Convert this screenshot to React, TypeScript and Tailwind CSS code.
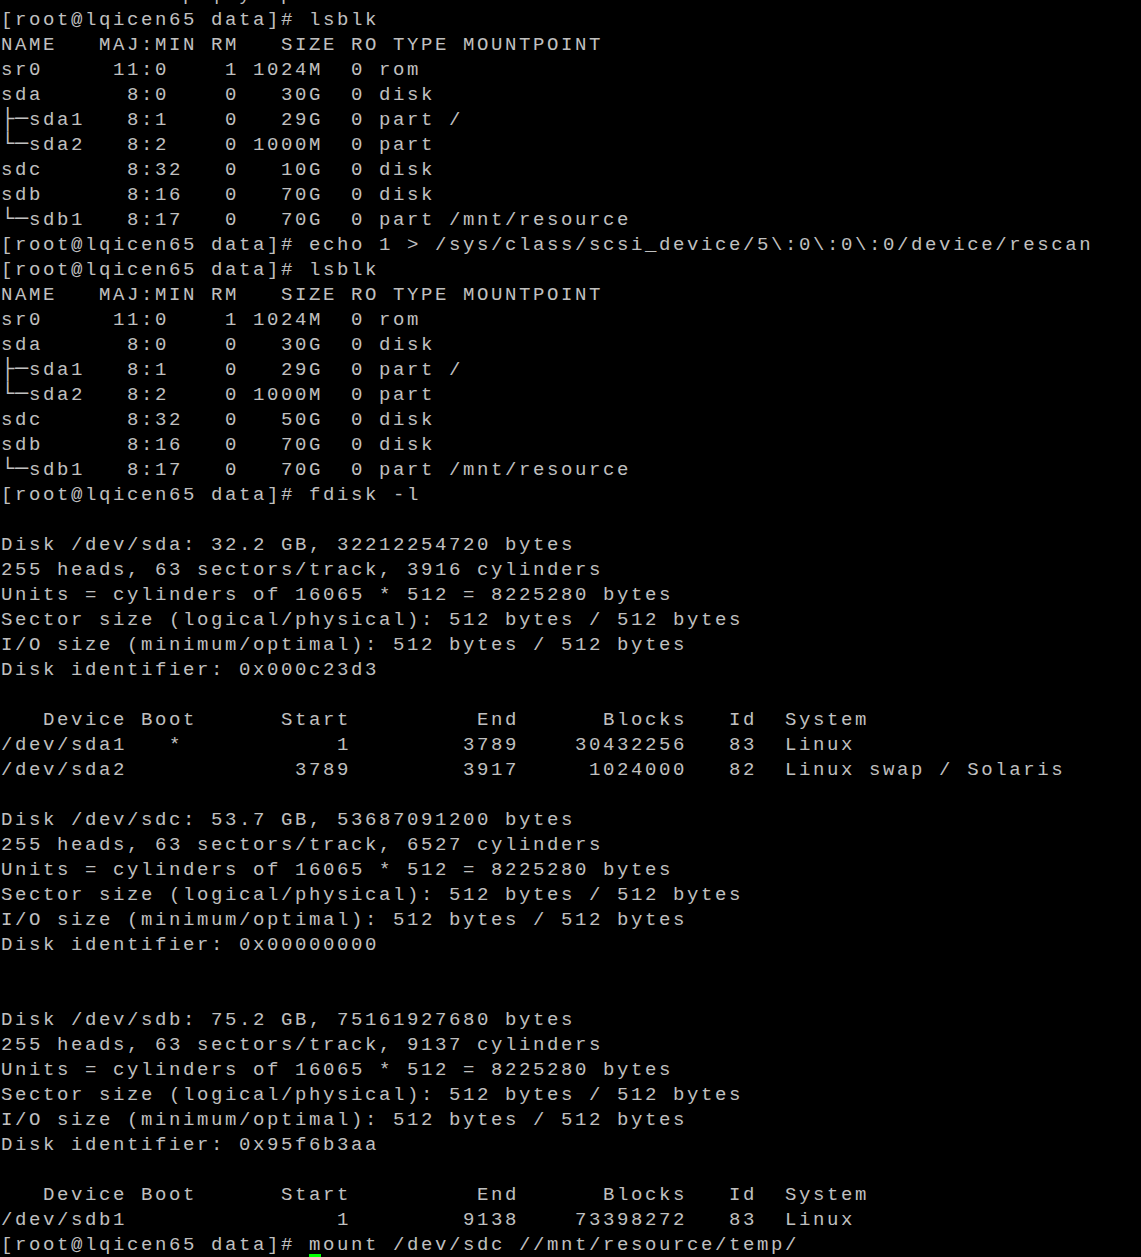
const PROMPT = "[root@lqicen65 data]# ";

// lsblk row: columns line up like the real tool output
const lb = (name: string, maj: string, min: string, rm: string, size: string, ro: string, type: string, mp = "") =>
  (name.padEnd(7) + maj.padStart(3) + ":" + min.padEnd(3) + rm.padStart(3) + size.padStart(6) + ro.padStart(3) + " " + type.padEnd(4) + " " + mp).trimEnd();

// fdisk partition row
const fd = (dev: string, boot: string, start: string, end: string, blocks: string, id: string, sys: string) =>
  dev.padEnd(12) + boot.padEnd(1) + start.padStart(12) + end.padStart(12) + blocks.padStart(12) + id.padStart(5) + "  " + sys;

const fdHeader = "   Device Boot" + "Start".padStart(11) + "End".padStart(12) + "Blocks".padStart(12) + "Id".padStart(5) + "  System";

const lsblk = (sdc: string) => [
  PROMPT + "lsblk",
  "NAME   MAJ:MIN RM   SIZE RO TYPE MOUNTPOINT",
  lb("sr0", "11", "0", "1", "1024M", "0", "rom"),
  lb("sda", "8", "0", "0", "30G", "0", "disk"),
  lb("├─sda1", "8", "1", "0", "29G", "0", "part", "/"),
  lb("└─sda2", "8", "2", "0", "1000M", "0", "part"),
  lb("sdc", "8", "32", "0", sdc, "0", "disk"),
  lb("sdb", "8", "16", "0", "70G", "0", "disk"),
  lb("└─sdb1", "8", "17", "0", "70G", "0", "part", "/mnt/resource"),
];

const diskInfo = (dev: string, gb: string, bytes: string, cyl: string, ident: string) => [
  `Disk ${dev}: ${gb} GB, ${bytes} bytes`,
  `255 heads, 63 sectors/track, ${cyl} cylinders`,
  "Units = cylinders of 16065 * 512 = 8225280 bytes",
  "Sector size (logical/physical): 512 bytes / 512 bytes",
  "I/O size (minimum/optimal): 512 bytes / 512 bytes",
  `Disk identifier: ${ident}`,
];

const lines: string[] = [
  "             p | y  p",
  ...lsblk("10G").slice(0, 1),
  ...lsblk("10G").slice(1),
  PROMPT + "echo 1 > /sys/class/scsi_device/5\\:0\\:0\\:0/device/rescan",
  ...lsblk("50G"),
  PROMPT + "fdisk -l",
  "",
  ...diskInfo("/dev/sda", "32.2", "32212254720", "3916", "0x000c23d3"),
  "",
  fdHeader,
  fd("/dev/sda1", "*", "1", "3789", "30432256", "83", "Linux"),
  fd("/dev/sda2", " ", "3789", "3917", "1024000", "82", "Linux swap / Solaris"),
  "",
  ...diskInfo("/dev/sdc", "53.7", "53687091200", "6527", "0x00000000"),
  "",
  "",
  ...diskInfo("/dev/sdb", "75.2", "75161927680", "9137", "0x95f6b3aa"),
  "",
  fdHeader,
  fd("/dev/sdb1", " ", "1", "9138", "73398272", "83", "Linux"),
  PROMPT + "mount /dev/sdc //mnt/resource/temp/",
];

function Line({ text }: { text: string }) {
  const tree = text.startsWith("├─") || text.startsWith("└─");
  return (
    <div className="h-[25px] leading-[25px] whitespace-pre">
      {tree ? (
        <>
          <span className="text-[22px] leading-[0] tracking-[0.8px]">{text.slice(0, 2)}</span>
          {text.slice(2)}
        </>
      ) : (
        text || " "
      )}
    </div>
  );
}

export default function App() {
  return (
    <div className="h-[1257px] w-[1141px] overflow-hidden bg-black text-[#c0c0c0] font-['Liberation_Mono','DejaVu_Sans_Mono',monospace] text-[19px] tracking-[2.6px]">
      <div className="-mt-[17.5px] pl-[1px]">
        {lines.map((l, i) => (
          <Line key={i} text={l} />
        ))}
        <div className="h-[25px] whitespace-pre">
          {" ".repeat(22)}
          <span className="relative -top-[4px] inline-block h-[25px] w-[12px] bg-[#00ff00] align-top" />
        </div>
      </div>
    </div>
  );
}
